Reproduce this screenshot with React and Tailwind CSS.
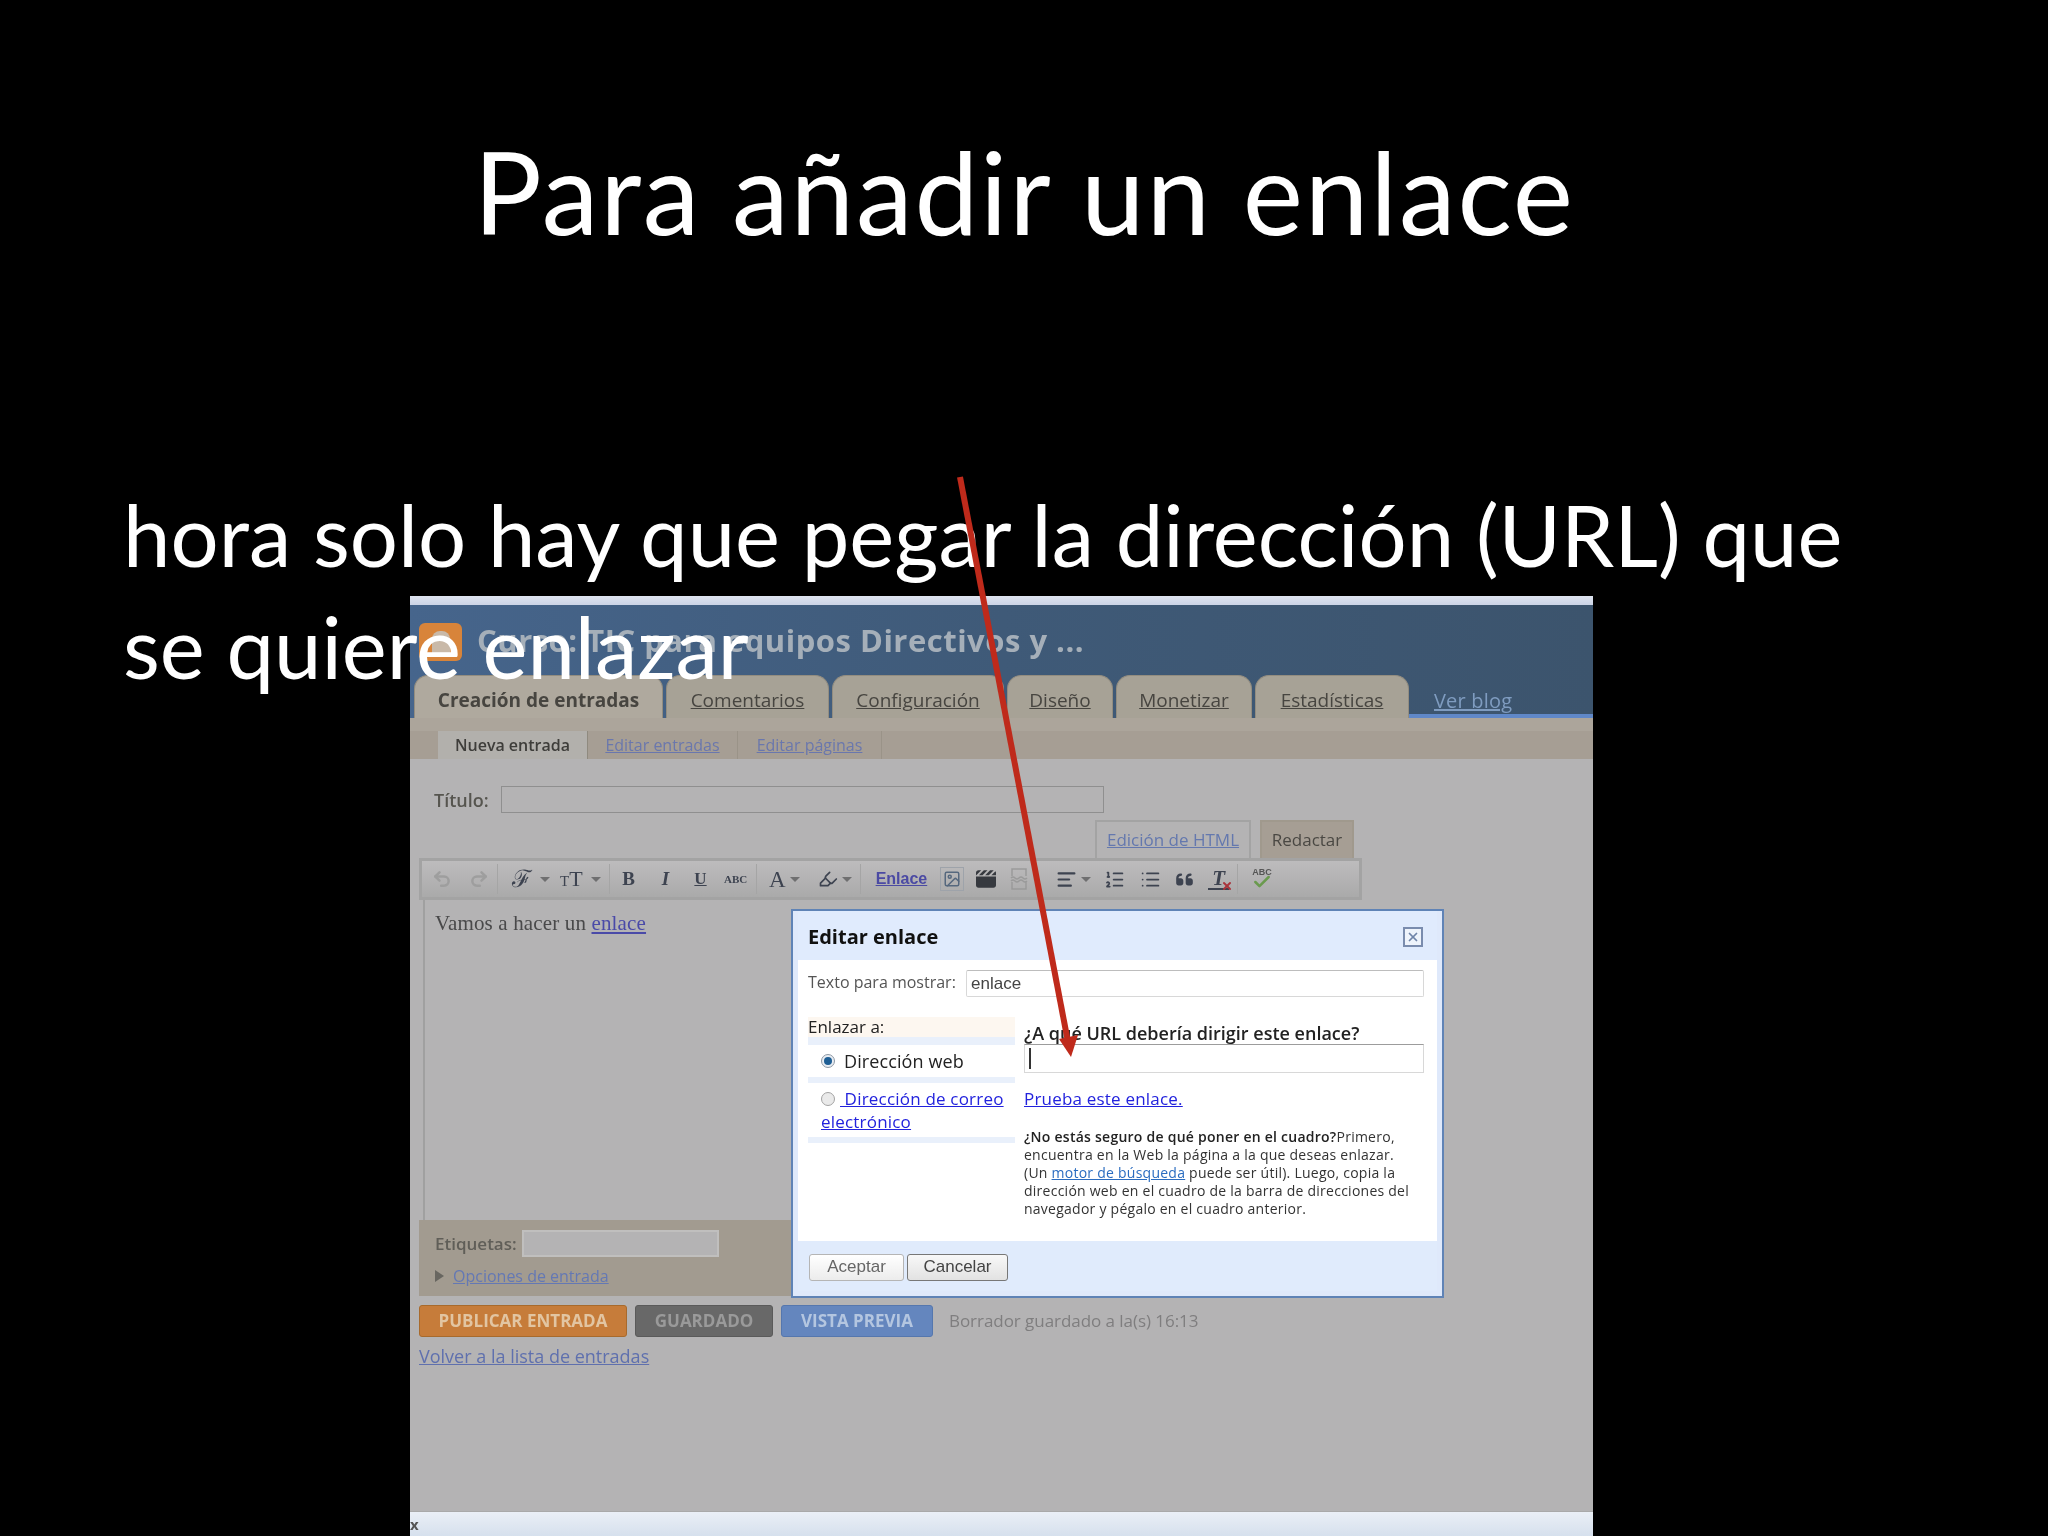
import React from 'react'
import { Undo2, Redo2, Highlighter, Image, AlignLeft, ListOrdered, List, Check, X } from 'lucide-react'
import { FaClapperboard, FaQuoteLeft } from 'react-icons/fa6'

const Caret = () => <span className="ml-1 w-0 h-0 border-x-[5px] border-x-transparent border-t-[5px] border-t-[#6f6f70]" />

const Sep = () => <span className="w-px h-[30px] bg-[#a5a5a5] mx-2" />

const Toolbar = () => (
  <div className="flex items-center h-[36px] mx-[3px] pl-[10px] bg-gradient-to-b from-[#bdbcbd] to-[#aaaaaa] text-[#3d4350]">
    <Undo2 size={20} strokeWidth={3} className="text-[#9e9e9e] w-[20px] mr-[17px]" />
    <Redo2 size={20} strokeWidth={3} className="text-[#9e9e9e] w-[20px]" />
    <Sep />
    <span className="font-['DejaVu_Serif'] text-[24px] leading-none ml-[6px] w-[24px]">ℱ</span>
    <Caret />
    <span className="font-['Liberation_Serif'] leading-none ml-[10px] w-[27px]"><span className="text-[15px]">T</span><span className="text-[22px]">T</span></span>
    <Caret />
    <Sep />
    <span className="font-['Liberation_Serif'] font-bold text-[19px] w-[15px] text-center ml-[3px] mr-[22px]">B</span>
    <span className="font-['Liberation_Serif'] font-bold italic text-[19px] w-[15px] text-center mr-[20px]">I</span>
    <span className="font-['Liberation_Serif'] font-bold underline text-[17px] w-[15px] text-center mr-[16px]">U</span>
    <span className="font-['Liberation_Serif'] text-[11px] font-bold w-[24px]">ABC</span>
    <Sep />
    <span className="font-['Liberation_Serif'] text-[23px] ml-[4px] leading-none">A</span>
    <Caret />
    <Highlighter size={20} className="ml-[18px]" />
    <Caret />
    <Sep />
    <span className="font-['Liberation_Sans'] font-bold text-[16px] text-[#4b4aa3] underline ml-[7px]">Enlace</span>
    <span className="ml-[13px] w-[24px] h-[24px] border border-[#9ea3aa] flex items-center justify-center"><Image size={18} className="text-[#56687e]" /></span>
    <FaClapperboard size={20} className="ml-[12px] text-[#36393f]" />
    <svg className="ml-[14px]" width="18" height="22" viewBox="0 0 18 22" fill="none" stroke="#9a9a9a" strokeWidth="1.5">
      <path d="M2 8V1h14v7M2 14v7h14v-7M1 10q2-2 4 0t4 0 4 0 4 0M1 13q2-2 4 0t4 0 4 0 4 0" />
    </svg>
    <Sep />
    <AlignLeft size={21} strokeWidth={2.5} className="ml-[11px]" />
    <Caret />
    <ListOrdered size={21} className="ml-[13px]" />
    <List size={21} className="ml-[15px]" />
    <FaQuoteLeft size={19} className="ml-[14px]" />
    <span className="relative ml-[14px] w-[21px] border-b-2 border-[#3d4350] font-['Liberation_Serif'] italic font-bold text-[21px] leading-[20px] text-center">
      T
      <X size={12} strokeWidth={4} className="absolute -right-1 -bottom-1 text-[#a9343c]" />
    </span>
    <span className="w-px h-[30px] bg-[#a5a5a5] ml-[8px]" />
    <span className="relative ml-[14px] w-[20px] h-[26px]">
      <span className="absolute top-0 left-0 font-['Liberation_Sans'] text-[9px] font-bold text-[#555]">ABC</span>
      <Check size={20} strokeWidth={3} className="absolute bottom-0 left-0 text-[#6a9a4e]" />
    </span>
  </div>
)

const Dialog = () => (
  <div className="absolute left-[381px] top-[313px] w-[653px] h-[389px] flex flex-col border-2 border-[#5f83b6] bg-[#dfe9fb] px-[5px] pb-[5px] text-[#333]">
    <div className="h-[49px] shrink-0 flex items-center justify-between pl-[10px] pr-[14px] pt-[2px] bg-[#e0ebfd]">
      <span className="font-bold text-[20px] text-[#111]">Editar enlace</span>
      <span className="w-[20px] h-[20px] border-2 border-[#7a8cae] bg-[#eef3fb] flex items-center justify-center">
        <X size={14} strokeWidth={3} className="text-[#6f84a8]" />
      </span>
    </div>
    <div className="h-[281px] shrink-0 bg-white pl-[10px] pr-[13px]">
      <div className="flex items-center h-[27px] mt-[10px]">
        <span className="text-[16px] text-[#555] w-[158px] -mt-[3px]">Texto para mostrar:</span>
        <span className="flex-1 h-[27px] border border-[#d8d8d8] border-t-[#bdbdbd] rounded-[2px] pl-[4px] text-[17px] leading-[26px] font-['Liberation_Sans'] text-[#444]">enlace</span>
      </div>
      <div className="flex mt-[20px]">
        <div className="w-[207px] shrink-0 text-[#222]">
          <div className="h-[20px] bg-[#fdf7f0] text-[17px] leading-[20px]">Enlazar a:</div>
          <div className="bg-[#e9f0fb] py-[8px] pb-[6px]">
            <div className="bg-white h-[32px] flex items-center pl-[13px] text-[18px] tracking-[0.1px]">
              <span className="w-[14px] h-[14px] rounded-full border border-[#8e98a4] bg-[#e8edf3] flex items-center justify-center mr-[9px]"><span className="w-[8px] h-[8px] rounded-full bg-[#1d5e94]" /></span>
              Dirección web
            </div>
            <div className="bg-white mt-[6px] h-[54px] text-[17px] leading-[23px] pt-[4px] pb-[4px] text-[#2222dd] underline overflow-hidden whitespace-nowrap tracking-[0.2px]">
              <span className="inline-block w-[14px] h-[14px] rounded-full border border-[#a3a3a3] bg-[#eaeaea] ml-[13px] mr-[5px] align-[-1px]" /> Dirección de correo
              <div className="ml-[13px]">electrónico</div>
            </div>
          </div>
        </div>
        <div className="flex-1 ml-[9px] mt-[6px]">
          <div className="text-[18px] leading-[20px] text-[#222] font-semibold whitespace-nowrap">¿A qué URL debería dirigir este enlace?</div>
          <div className="h-[29px] mt-[1px] border border-[#d8d8d8] border-t-[#9c9c9c] pl-[4px] pt-[3px]"><div className="w-[2px] h-[21px] bg-[#333]" /></div>
          <div className="text-[17px] tracking-[0.2px] text-[#2222dd] underline mt-[15px] leading-[22px]">Prueba este enlace.</div>
          <p className="text-[14px] leading-[18px] tracking-[0.25px] whitespace-nowrap text-[#333] mt-[18px]">
            <span className="font-semibold text-[#222]">¿No estás seguro de qué poner en el cuadro?</span>Primero,<br />
            encuentra en la Web la página a la que deseas enlazar.<br />
            (Un <span className="text-[#2a6cc0] underline">motor de búsqueda</span> puede ser útil). Luego, copia la<br />
            dirección web en el cuadro de la barra de direcciones del<br />
            navegador y pégalo en el cuadro anterior.
          </p>
        </div>
      </div>
    </div>
    <div className="flex-1 flex gap-[3px] items-center pl-[11px] pt-[2px] bg-[#e0ebfc] font-['Liberation_Sans'] text-[17px]">
      <span className="w-[95px] h-[27px] flex items-center justify-center rounded-[3px] border border-[#b5b5b5] bg-gradient-to-b from-white to-[#ececec] text-[#666]">Aceptar</span>
      <span className="w-[101px] h-[27px] flex items-center justify-center rounded-[3px] border border-[#777] bg-gradient-to-b from-[#f8f8f8] to-[#e2e2e2] text-[#444]">Cancelar</span>
    </div>
  </div>
)

const tabClass = "h-[43px] mr-[3px] pt-[6px] flex items-center justify-center rounded-t-[14px] border-t border-x border-[#938d80] bg-[#a7a296] text-[19px] text-[#474540] underline"

const Panel = () => (
  <div className="relative ml-[410px] w-[1183px] h-[940px] bg-[#b4b3b4] flex flex-col font-['Open_Sans'] blur-[0.4px]">
    <div className="h-[9px] shrink-0 bg-gradient-to-b from-[#dfe4f0] to-[#ccd4e6]" />
    <div className="h-[113px] shrink-0 flex flex-col bg-gradient-to-r from-[#46658c] via-[#3f5a78] to-[#3c546d]">
      <div className="h-[70px] flex items-center pl-[9px] shrink-0">
        <div className="w-[43px] h-[38px] rounded-[6px] bg-[#d8843a] flex items-center justify-center mt-[4px]"><div className="w-[18px] h-[22px] rounded-t-[8px] bg-[#c9b9a8]" /></div>
        <span className="ml-[15px] text-[31px] font-bold text-[#a5afb9] tracking-[0.5px]">Curso: TIC para equipos Directivos y ...</span>
      </div>
      <div className="flex-1 flex pl-[4px]">
        <div className={tabClass + " w-[249px] !bg-[#afa99e] !no-underline font-bold text-[#3f3e3b]"}>Creación de entradas</div>
        <div className={tabClass + " w-[163px]"}>Comentarios</div>
        <div className={tabClass + " w-[172px]"}>Configuración</div>
        <div className={tabClass + " w-[106px]"}>Diseño</div>
        <div className={tabClass + " w-[136px]"}>Monetizar</div>
        <div className={tabClass + " w-[154px]"}>Estadísticas</div>
        <div className="flex-1 border-b-4 border-[#6088c8] pl-[25px] pt-[12px] -ml-[3px] text-[20px] leading-[27px] tracking-[0.2px] text-[#7f9cc0] underline">Ver blog</div>
      </div>
    </div>
    <div className="h-[13px] shrink-0 bg-[#aca59b]" />
    <div className="h-[28px] shrink-0 flex bg-[#a69e94] pl-[28px] text-[16px]">
      <div className="w-[150px] bg-[#b2b0ac] border-r border-[#8f8a7f] flex items-center justify-center font-semibold text-[#3e3d3a]">Nueva entrada</div>
      <div className="w-[150px] border-r border-[#9a9388] flex items-center justify-center text-[#6a77ad] underline">Editar entradas</div>
      <div className="w-[144px] border-r border-[#9a9388] flex items-center justify-center text-[#6a77ad] underline">Editar páginas</div>
    </div>
    <div className="h-[26px] mt-[27px] shrink-0 flex items-center pl-[24px] text-[18px] text-[#56554f]">
      <span className="w-[67px] font-semibold pt-[2px]">Título:</span>
      <div className="w-[603px] h-[27px] border border-[#8f8f8f]" />
    </div>
    <div className="h-[38px] mt-[8px] shrink-0 flex justify-end pr-[239px] text-[17px]">
      <div className="w-[156px] mr-[9px] border-2 border-b-0 border-[#a3a3a3] flex items-center justify-center text-[#6478ae] underline">Edición de HTML</div>
      <div className="w-[94px] bg-[#a69e94] border-2 border-b-0 border-[#a0998d] flex items-center justify-center text-[#4a4843]">Redactar</div>
    </div>
    <div className="ml-[9px] w-[943px] py-[3px] bg-[#a3a3a3] shrink-0">
      <Toolbar />
    </div>
    <div className="ml-[13px] w-[936px] h-[320px] shrink-0 border-l-2 border-[#a0a0a0] pl-[10px] pt-[10px] font-['Liberation_Serif'] text-[21px] tracking-[0.15px] leading-[27px] text-[#49494a]">
      Vamos a hacer un <span className="text-[#4a4aa8] underline">enlace</span>
    </div>
    <div className="ml-[9px] w-[943px] h-[76px] shrink-0 bg-[#a29b90] pl-[16px] text-[17px] text-[#605e58]">
      <div className="flex items-center h-[27px] mt-[10px]">
        <span className="w-[87px] font-semibold">Etiquetas:</span>
        <div className="w-[197px] h-[27px] bg-[#b4b3b4] border-2 border-[#c0bfbe]" />
      </div>
      <div className="flex items-center mt-[7px] text-[16px]">
        <span className="w-0 h-0 border-y-[6px] border-y-transparent border-l-[9px] border-l-[#686660] mr-[9px]" />
        <span className="text-[#6478b4] underline">Opciones de entrada</span>
      </div>
    </div>
    <div className="flex h-[32px] mt-[9px] ml-[9px] gap-[8px] shrink-0 text-[17px] font-bold">
      <div className="w-[208px] rounded-[3px] bg-[#c67c3a] border border-[#a86a2c] flex items-center justify-center text-[#e2c5a2]">PUBLICAR ENTRADA</div>
      <div className="w-[138px] rounded-[3px] bg-[#686868] border border-[#5a5a5a] flex items-center justify-center text-[#9a9a9a]">GUARDADO</div>
      <div className="w-[152px] rounded-[3px] bg-[#6486be] border border-[#5577ae] flex items-center justify-center text-[#b4c6e0]">VISTA PREVIA</div>
      <span className="ml-[8px] self-center font-normal text-[17px] -tracking-[0.05px] text-[#7f7e7f]">Borrador guardado a la(s) 16:13</span>
    </div>
    <div className="ml-[9px] mt-[6px] text-[18px] leading-[26px] text-[#5f70ae] underline">Volver a la lista de entradas</div>
    <div className="mt-auto h-[25px] shrink-0 bg-gradient-to-b from-[#eaeff6] to-[#d6e0ed] border-t border-[#a9a9a9] text-[15px] leading-[24px] font-bold text-[#555]">x</div>
    <Dialog />
  </div>
)

export default function App() {
  return (
    <div className="relative w-[2048px] h-[1536px] overflow-hidden bg-black">
      <h1 className="h-[596px] pt-[121px] text-center text-[114px] leading-[140px] tracking-[1.8px] text-white font-['Lato',sans-serif]">Para añadir un enlace</h1>
      <Panel />
      <p className="absolute left-[123px] top-[478px] w-[1860px] text-[85px] leading-[112px] text-white font-['Lato',sans-serif]">
        hora solo hay que pegar la dirección (URL) que<br />se quiere enlazar
      </p>
      <svg className="absolute inset-0" width="2048" height="1536" viewBox="0 0 2048 1536">
        <line x1="960" y1="477" x2="1068" y2="1042" stroke="#bf2a1b" strokeWidth="6" />
        <polygon points="1071,1057 1059,1039 1078,1035" fill="#bf2a1b" />
      </svg>
    </div>
  )
}
